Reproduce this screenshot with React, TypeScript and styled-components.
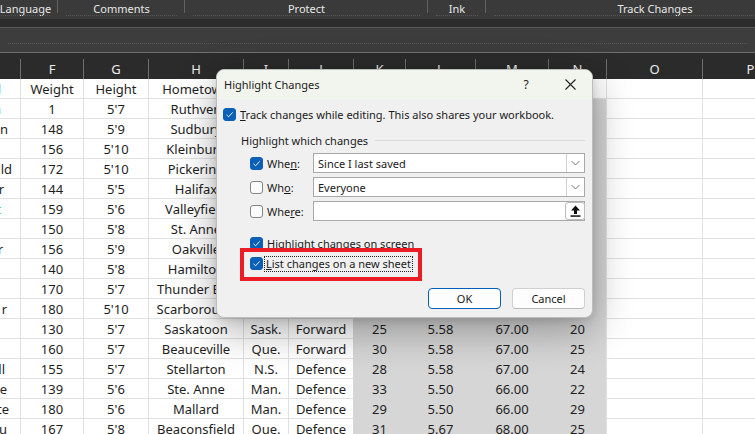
import React from "react";
import styled, { createGlobalStyle } from "styled-components";

const GlobalStyle = createGlobalStyle`
  html, body {
    margin: 0;
    padding: 0;
    background: #ffffff;
  }
  body {
    font-family: "Noto Sans", "Open Sans", sans-serif;
    overflow: hidden;
  }
`;

const COLS = "20px 63px 65px 95px 45px 65px 52px 70px 73px 58px 96px 96px";

const Screen = styled.div`
  position: relative;
  width: 755px;
  height: 434px;
  overflow: hidden;
  background: #ffffff;
`;

// ribbon group captions
const GroupBar = styled.div`
  display: flex;
  height: 19px;
  margin-left: -7px;
  background: #3a3a3a;
`;

const Group = styled.div<{ $w: number }>`
  position: relative;
  flex: 0 0 ${(p) => p.$w}px;
  text-align: center;
  color: #e8e8e8;
  font-size: 11px;
  line-height: 17px;
  white-space: nowrap;

  &::before {
    content: "";
    position: absolute;
    left: 8px;
    right: 8px;
    bottom: 3px;
    border-top: 1px dotted #555555;
  }
  &::after {
    content: "";
    position: absolute;
    right: 0;
    top: 0;
    width: 1px;
    height: 13px;
    background: #626262;
  }
`;

const Strip = styled.div`
  height: 8px;
  background: #2c2c2c;
`;

const FormulaBar = styled.div`
  height: 24px;
  background: #3d3d3d;
  border-top: 1px solid #595959;
  border-bottom: 1px solid #707070;
`;

const Dots = styled.div`
  margin: 15px 8px 0;
  border-top: 1px dotted #545454;
`;

const HeaderZone = styled.div`
  background: #2b2b2b;
  padding-top: 6px;
`;

const Grid = styled.div`
  display: grid;
  grid-template-columns: ${COLS};
`;

const HeaderCell = styled.div<{ $first?: boolean }>`
  height: 20px;
  border-left: 1px solid ${(p) => (p.$first ? "transparent" : "#6e6e6e")};
  color: #ececec;
  font-size: 13px;
  line-height: 20px;
  text-align: center;
`;

const Cell = styled.div<{ $sel?: boolean; $link?: boolean; $pad?: number; $edge?: boolean }>`
  box-sizing: border-box;
  height: 20px;
  display: flex;
  align-items: center;
  justify-content: ${(p) => (p.$edge ? "flex-end" : "center")};
  padding-right: ${(p) => p.$pad ?? 0}px;
  overflow: hidden;
  white-space: nowrap;
  background: ${(p) => (p.$sel ? "#d6d6d6" : "#ffffff")};
  border-left: ${(p) => (p.$edge ? "none" : `1px solid ${p.$sel ? "#d6d6d6" : "#e1e1e1"}`)};
  border-bottom: 1px solid ${(p) => (p.$sel ? "#d6d6d6" : "#e1e1e1")};
  color: ${(p) => (p.$link ? "#22b4ea" : "#1e1e1e")};
  font-size: 13px;
`;

// dialog
const Dialog = styled.div`
  position: absolute;
  left: 216px;
  top: 69px;
  width: 377px;
  height: 249px;
  box-sizing: border-box;
  border: 1px solid #bdbdbd;
  border-radius: 8px;
  overflow: hidden;
  background: #f0f0f0;
  box-shadow: 0 12px 40px rgba(0, 0, 0, 0.32), 0 2px 8px rgba(0, 0, 0, 0.12);
  font-size: 11px;
  color: #1a1a1a;
`;

const TitleBar = styled.div`
  display: flex;
  align-items: center;
  height: 29px;
  padding: 0 6px 0 7px;
  background: #f2f5ee;
`;

const Title = styled.div`
  flex: 1;
  font-size: 11px;
`;

const TitleButton = styled.div<{ $w: number }>`
  width: ${(p) => p.$w}px;
  display: flex;
  justify-content: center;
  font-size: 12px;
  color: #222;
`;

const Body = styled.div`
  position: relative;
  display: flex;
  flex-direction: column;
  padding: 0 7px 0 6px;
`;

const Line = styled.div<{ $top: number; $indent: number }>`
  display: flex;
  align-items: center;
  margin-top: ${(p) => p.$top}px;
  padding-left: ${(p) => p.$indent}px;
  height: 13px;
  white-space: nowrap;
`;

const FieldLine = styled(Line)`
  height: 20px;
`;

const Box = styled.span<{ $on?: boolean }>`
  flex: 0 0 auto;
  box-sizing: border-box;
  width: 13px;
  height: 13px;
  margin-right: 4px;
  border-radius: 3px;
  border: 1px solid ${(p) => (p.$on ? "#0a5fb6" : "#858585")};
  background: ${(p) => (p.$on ? "#0a5fb6" : "#fbfbfb")};
  display: flex;
  align-items: center;
  justify-content: center;
`;

const Heading = styled.div`
  display: flex;
  align-items: center;
  gap: 7px;
  height: 16px;
  margin-top: 11px;
  padding-left: 18px;
  color: #1a1a1a;
`;

const Rule = styled.div<{ $top?: number }>`
  flex: 1;
  height: 1px;
  margin-top: ${(p) => p.$top ?? 0}px;
  margin-left: ${(p) => (p.$top ? 18 : 0)}px;
  background: #d9d9d9;
`;

const Combo = styled.div`
  margin-left: auto;
  box-sizing: border-box;
  width: 272px;
  height: 20px;
  display: flex;
  align-items: center;
  border: 1px solid #a8a8a8;
  background: #ffffff;
`;

const ComboText = styled.span`
  flex: 1;
  padding-left: 4px;
`;

const DropButton = styled.span`
  box-sizing: border-box;
  width: 18px;
  height: 18px;
  display: flex;
  align-items: center;
  justify-content: center;
  border-left: 1px solid #cfcfcf;
`;

const PickButton = styled.span`
  box-sizing: border-box;
  width: 20px;
  height: 18px;
  display: flex;
  align-items: center;
  justify-content: center;
  border: 1px solid #bcbcbc;
  border-radius: 3px;
  background: #ffffff;
  margin-right: -1px;
`;

const Focus = styled.span`
  padding: 0 1px;
  margin-left: -2px;
  outline: 1px dotted #222;
  line-height: 14px;
`;

// red annotation drawn over the dialog
const Mark = styled.div`
  position: absolute;
  left: 23px;
  top: 149px;
  width: 182px;
  height: 33px;
  box-sizing: border-box;
  border: 4px solid #ec1c24;
`;

const Buttons = styled.div`
  display: flex;
  justify-content: flex-end;
  gap: 11px;
  margin-top: 18px;
`;

const Button = styled.button<{ $primary?: boolean }>`
  box-sizing: border-box;
  width: 73px;
  height: 21px;
  padding: 0;
  border-radius: 4px;
  background: #fdfdfd;
  border: 1px solid ${(p) => (p.$primary ? "#005fb8" : "#d0d0d0")};
  border-bottom-color: ${(p) => (p.$primary ? "#005fb8" : "#b8b8b8")};
  font-family: inherit;
  font-size: 11px;
  color: #1a1a1a;
`;

const Check = () => (
  <svg width="9" height="9" viewBox="0 0 9 9">
    <polyline points="1.5,4.8 3.6,6.8 7.6,2.4" fill="none" stroke="#e8f1fb" strokeWidth="1" />
  </svg>
);

const Chevron = () => (
  <svg width="9" height="6" viewBox="0 0 9 6">
    <polyline points="0.5,1 4.5,5 8.5,1" fill="none" stroke="#7a7a7a" strokeWidth="1" />
  </svg>
);

const UpArrow = () => (
  <svg width="11" height="12" viewBox="0 0 11 12">
    <path d="M5.5 0.5 L10 5.5 H7 V9 H4 V5.5 H1 Z" fill="#111" />
    <rect x="0.5" y="10.3" width="10" height="1.5" fill="#111" />
  </svg>
);

type Row = {
  e: string;
  pad: number;
  link?: boolean;
  f: string;
  g: string;
  h: string;
  i?: string;
  j?: string;
  k?: string;
  l?: string;
  m?: string;
  n?: string;
};

const rows: Row[] = [
  { e: "l", pad: 19, f: "Weight", g: "Height", h: "Hometown", i: "Prov.", j: "Position", k: "Age", l: "Feet", m: "Inches", n: "No." },
  { e: "n", pad: 19, link: true, f: "1", g: "5'7", h: "Ruthven" },
  { e: "n", pad: 12, f: "148", g: "5'9", h: "Sudbury" },
  { e: "", pad: 0, f: "156", g: "5'10", h: "Kleinburg" },
  { e: "ld", pad: 8, f: "172", g: "5'10", h: "Pickering" },
  { e: "r", pad: 16, f: "144", g: "5'5", h: "Halifax" },
  { e: "t", pad: 19, link: true, f: "159", g: "5'6", h: "Valleyfield" },
  { e: "", pad: 0, f: "150", g: "5'8", h: "St. Anne" },
  { e: "r", pad: 17, f: "156", g: "5'9", h: "Oakville" },
  { e: "", pad: 0, f: "140", g: "5'8", h: "Hamilton" },
  { e: "", pad: 0, f: "170", g: "5'7", h: "Thunder Bay" },
  { e: "r", pad: 13, f: "180", g: "5'10", h: "Scarborough" },
  { e: "", pad: 0, f: "130", g: "5'7", h: "Saskatoon", i: "Sask.", j: "Forward", k: "25", l: "5.58", m: "67.00", n: "20" },
  { e: "", pad: 0, f: "160", g: "5'7", h: "Beauceville", i: "Que.", j: "Forward", k: "30", l: "5.58", m: "67.00", n: "25" },
  { e: "ll", pad: 15, f: "155", g: "5'7", h: "Stellarton", i: "N.S.", j: "Defence", k: "28", l: "5.58", m: "67.00", n: "24" },
  { e: "e", pad: 13, f: "139", g: "5'6", h: "Ste. Anne", i: "Man.", j: "Defence", k: "33", l: "5.50", m: "66.00", n: "22" },
  { e: "te", pad: 11, f: "180", g: "5'6", h: "Mallard", i: "Man.", j: "Defence", k: "29", l: "5.50", m: "66.00", n: "29" },
  { e: "u", pad: 13, f: "167", g: "5'8", h: "Beaconsfield", i: "Que.", j: "Defence", k: "31", l: "5.67", m: "68.00", n: "25" },
];

const groups = [
  { name: "Language", w: 65 },
  { name: "Comments", w: 127 },
  { name: "Protect", w: 243 },
  { name: "Ink", w: 58 },
  { name: "Track Changes", w: 338 },
];

const letters = ["", "F", "G", "H", "I", "J", "K", "L", "M", "N", "O", "P"];

const App = () => {
  return (
    <Screen>
      <GlobalStyle />
      <GroupBar>
        {groups.map((g) => (
          <Group key={g.name} $w={g.w}>
            {g.name}
          </Group>
        ))}
      </GroupBar>
      <Strip />
      <FormulaBar>
        <Dots />
      </FormulaBar>
      <HeaderZone>
        <Grid>
          {letters.map((l, idx) => (
            <HeaderCell key={idx} $first={idx === 0}>
              {l}
            </HeaderCell>
          ))}
        </Grid>
      </HeaderZone>
      <Grid>
        {rows.map((r, idx) => {
          const sel = idx > 0;
          return (
            <React.Fragment key={idx}>
              <Cell $edge $pad={r.pad} $link={r.link}>
                {r.e}
              </Cell>
              <Cell>{r.f}</Cell>
              <Cell>{r.g}</Cell>
              <Cell>{r.h}</Cell>
              <Cell>{r.i}</Cell>
              <Cell>{r.j}</Cell>
              <Cell $sel={sel}>{r.k}</Cell>
              <Cell $sel={sel}>{r.l}</Cell>
              <Cell $sel={sel}>{r.m}</Cell>
              <Cell $sel={sel}>{r.n}</Cell>
              <Cell />
              <Cell />
            </React.Fragment>
          );
        })}
      </Grid>

      <Dialog>
        <TitleBar>
          <Title>Highlight Changes</Title>
          <TitleButton $w={24}>?</TitleButton>
          <TitleButton $w={16} />
          <TitleButton $w={32}>
            <svg width="11" height="11" viewBox="0 0 11 11">
              <path d="M0.5 0.5 L10.5 10.5 M10.5 0.5 L0.5 10.5" stroke="#222" strokeWidth="1.1" />
            </svg>
          </TitleButton>
        </TitleBar>
        <Body>
          <Line $top={9} $indent={0}>
            <Box $on>
              <Check />
            </Box>
            <span>
              <u>T</u>rack changes while editing. This also shares your workbook.
            </span>
          </Line>
          <Heading>
            <span>Highlight which changes</span>
            <Rule />
          </Heading>
          <FieldLine $top={5} $indent={27}>
            <Box $on>
              <Check />
            </Box>
            <span>
              Whe<u>n</u>:
            </span>
            <Combo>
              <ComboText>Since I last saved</ComboText>
              <DropButton>
                <Chevron />
              </DropButton>
            </Combo>
          </FieldLine>
          <FieldLine $top={4} $indent={27}>
            <Box />
            <span>
              Wh<u>o</u>:
            </span>
            <Combo>
              <ComboText>Everyone</ComboText>
              <DropButton>
                <Chevron />
              </DropButton>
            </Combo>
          </FieldLine>
          <FieldLine $top={4} $indent={27}>
            <Box />
            <span>
              Whe<u>r</u>e:
            </span>
            <Combo>
              <ComboText />
              <PickButton>
                <UpArrow />
              </PickButton>
            </Combo>
          </FieldLine>
          <Rule $top={8} />
          <Line $top={8} $indent={27}>
            <Box $on>
              <Check />
            </Box>
            <span>
              Highlight changes on <u>s</u>creen
            </span>
          </Line>
          <Line $top={7} $indent={27}>
            <Box $on>
              <Check />
            </Box>
            <Focus>
              <u>L</u>ist changes on a new sheet
            </Focus>
          </Line>
          <Buttons>
            <Button $primary>OK</Button>
            <Button>Cancel</Button>
          </Buttons>
          <Mark />
        </Body>
      </Dialog>
    </Screen>
  );
};

export default App;
